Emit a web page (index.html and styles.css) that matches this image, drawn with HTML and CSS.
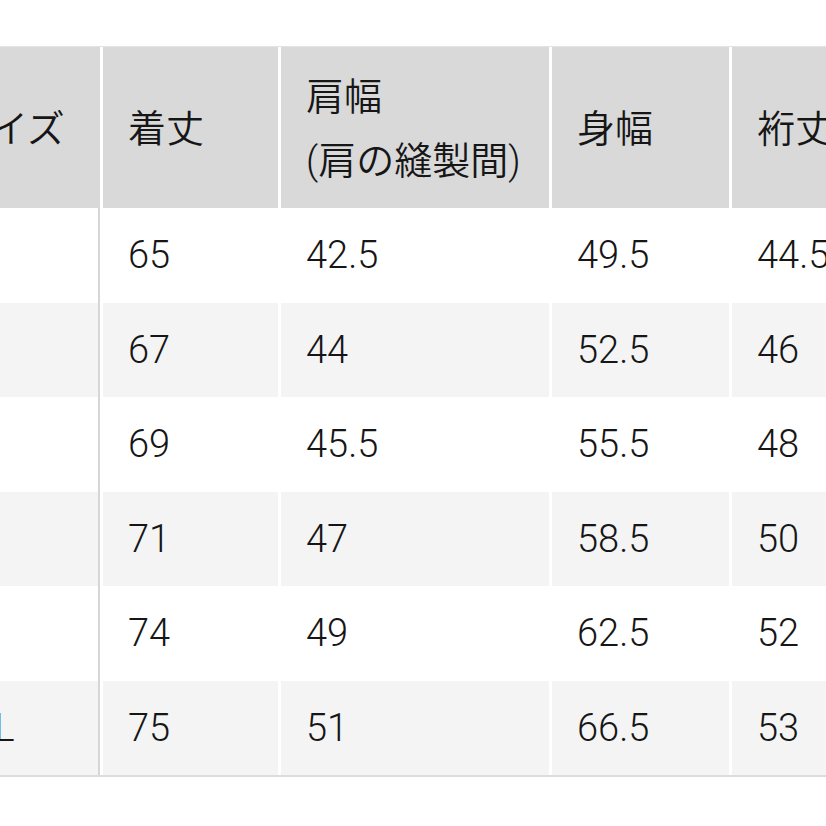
FILE: index.html
```html
<!DOCTYPE html>
<html lang="ja">
<head>
<meta charset="utf-8">
<title>サイズ表</title>
<link rel="stylesheet" href="styles.css">
</head>
<body>
<div class="wrap">
  <table class="size-table">
    <colgroup>
      <col class="c-size">
      <col class="c-len">
      <col class="c-shoulder">
      <col class="c-body">
      <col class="c-sleeve">
    </colgroup>
    <thead>
      <tr>
        <th class="first">サイズ</th>
        <th>着丈</th>
        <th>肩幅<br>(肩の縫製間)</th>
        <th>身幅</th>
        <th>裄丈</th>
      </tr>
    </thead>
    <tbody>
      <tr><td class="first">XS</td><td>65</td><td>42.5</td><td>49.5</td><td>44.5</td></tr>
      <tr class="alt"><td class="first">S</td><td>67</td><td>44</td><td>52.5</td><td>46</td></tr>
      <tr><td class="first">M</td><td>69</td><td>45.5</td><td>55.5</td><td>48</td></tr>
      <tr class="alt"><td class="first">L</td><td>71</td><td>47</td><td>58.5</td><td>50</td></tr>
      <tr><td class="first">XL</td><td>74</td><td>49</td><td>62.5</td><td>52</td></tr>
      <tr class="alt"><td class="first">XXL</td><td>75</td><td>51</td><td>66.5</td><td>53</td></tr>
    </tbody>
  </table>
</div>
</body>
</html>
```

FILE: styles.css
```css
html, body {
  margin: 0;
  padding: 0;
  background: #ffffff;
}

.wrap {
  width: 826px;
  height: 826px;
  overflow: hidden;
  padding-top: 46px;
  box-sizing: border-box;
}

.size-table {
  margin-left: -80px;
  border-collapse: separate;
  border-spacing: 3px 0;
  table-layout: fixed;
  width: 1030px;
  border-top: 1px solid #e3e3e3;
  border-bottom: 2px solid #dcdcdc;
  font-family: Roboto, "Noto Sans CJK JP", sans-serif;
  color: #161616;
}

.c-size { width: 177px; }
.c-len { width: 175px; }
.c-shoulder { width: 268px; }
.c-body { width: 177px; }
.c-sleeve { width: 215px; }

.size-table th,
.size-table td {
  text-align: left;
  vertical-align: middle;
  padding: 0 0 0 25px;
  box-sizing: border-box;
  white-space: nowrap;
  overflow: hidden;
}

.size-table th {
  height: 161px;
  background: #d9d9d9;
  font-size: 38px;
  font-weight: 350;
  line-height: 1.66;
  padding-top: 4px;
}

.size-table th.first {
  padding-left: 29px;
}

.size-table td {
  height: 94.5px;
  font-size: 38px;
  font-weight: 300;
  line-height: 1;
  background: #ffffff;
}

.size-table tr.alt td {
  background: #f4f4f4;
}

.size-table td.first {
  border-right: 2px solid #d6d6d6;
}
```
